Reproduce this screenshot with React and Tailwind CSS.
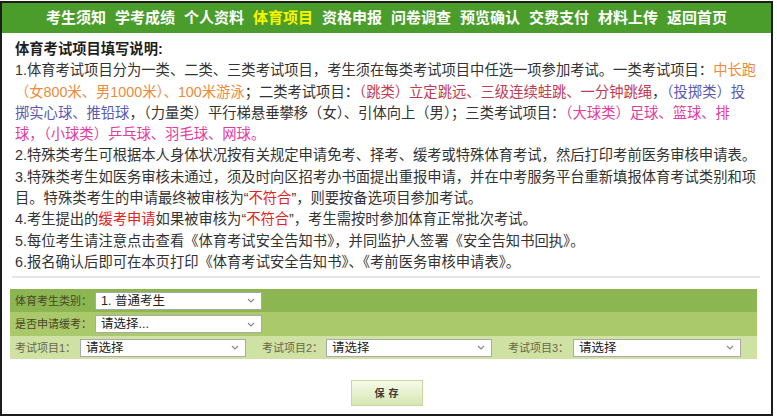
import React from "react";

const navItems = [
  "考生须知",
  "学考成绩",
  "个人资料",
  "体育项目",
  "资格申报",
  "问卷调查",
  "预览确认",
  "交费支付",
  "材料上传",
  "返回首页",
];

const Chevron = () => (
  <svg width="8" height="5" viewBox="0 0 8 5" className="shrink-0">
    <polyline points="1,1 4,4 7,1" fill="none" stroke="#888" strokeWidth="1.2" />
  </svg>
);

const FakeSelect = ({ value, width }) => (
  <div
    className={`flex h-[18px] items-center justify-between border border-[#a9a9a9] bg-white pl-[5px] pr-[6px] text-[12.5px] text-[#222] ${width}`}
  >
    <span className="leading-none">{value}</span>
    <Chevron />
  </div>
);

const Orange = ({ children }) => <span className="text-[#ef8a3a]">{children}</span>;
const Crimson = ({ children }) => <span className="text-[#bf3a52]">{children}</span>;
const Blue = ({ children }) => <span className="text-[#5a5ab2]">{children}</span>;
const Pink = ({ children }) => <span className="text-[#e43b9e]">{children}</span>;
const Red = ({ children }) => <span className="text-[#e52222]">{children}</span>;

export default function App() {
  return (
    <div
      className="mt-px box-border flex h-[415px] w-[773px] flex-col border-2 border-[#1c1c1c] bg-white"
      style={{ fontFamily: '"Liberation Sans", "Noto Sans CJK SC", sans-serif' }}
    >
      {/* top nav */}
      <div className="flex h-[30px] shrink-0 items-center justify-center gap-[9px] bg-[#4b9d2b] text-[15px] font-bold text-white">
        {navItems.map((item) => (
          <span key={item} className={item === "体育项目" ? "text-[#f7f700]" : ""}>
            {item}
          </span>
        ))}
      </div>

      {/* instructions */}
      <div className="pl-[13px] pt-[6px] text-[14.3px] leading-[21.3px] text-[#333]">
        <div className="whitespace-nowrap font-bold text-[#1e1e1e]">体育考试项目填写说明:</div>
        <div className="whitespace-nowrap">
          1.体育考试项目分为一类、二类、三类考试项目，考生须在每类考试项目中任选一项参加考试。一类考试项目：
          <Orange>中长跑</Orange>
        </div>
        <div className="whitespace-nowrap">
          <Orange>（女800米、男1000米）、100米游泳</Orange>；二类考试项目：
          <Crimson>（跳类）立定跳远、三级连续蛙跳、一分钟跳绳</Crimson>，<Blue>（投掷类）投</Blue>
        </div>
        <div className="whitespace-nowrap">
          <Blue>掷实心球、推铅球</Blue>，（力量类）平行梯悬垂攀移（女）、引体向上（男）；三类考试项目：
          <Pink>（大球类）足球、篮球、排</Pink>
        </div>
        <div className="whitespace-nowrap">
          <Pink>球，（小球类）乒乓球、羽毛球、网球。</Pink>
        </div>
        <div className="whitespace-nowrap">
          2.特殊类考生可根据本人身体状况按有关规定申请免考、择考、缓考或特殊体育考试，然后打印考前医务审核申请表。
        </div>
        <div className="whitespace-nowrap">
          3.特殊类考生如医务审核未通过，须及时向区招考办书面提出重报申请，并在中考服务平台重新填报体育考试类别和项
        </div>
        <div className="whitespace-nowrap">
          目。特殊类考生的申请最终被审核为“<Red>不符合</Red>”，则要按备选项目参加考试。
        </div>
        <div className="whitespace-nowrap">
          4.考生提出的<Red>缓考申请</Red>如果被审核为“<Red>不符合</Red>”，考生需按时参加体育正常批次考试。
        </div>
        <div className="whitespace-nowrap">
          5.每位考生请注意点击查看《体育考试安全告知书》，并同监护人签署《安全告知书回执》。
        </div>
        <div className="whitespace-nowrap">
          6.报名确认后即可在本页打印《体育考试安全告知书》、《考前医务审核申请表》。
        </div>
      </div>

      <div className="ml-[10px] mt-[3px] h-[2px] w-[748px] bg-[#e6e6e6]" />

      {/* form */}
      <div className="ml-[8px] mt-[11px] w-[747px] text-[11px]">
        <div className="flex h-[23px] items-center bg-[#8cb651] pl-[5px]">
          <span className="w-[77px] shrink-0 whitespace-nowrap text-[#4a4628]">体育考生类别：</span>
          <div className="ml-[3px]">
            <FakeSelect value="1. 普通考生" width="w-[167px]" />
          </div>
        </div>
        <div className="flex h-[24px] items-center bg-[#a9c96b] pl-[5px]">
          <span className="w-[77px] shrink-0 whitespace-nowrap text-[#4a4628]">是否申请缓考：</span>
          <div className="ml-[3px]">
            <FakeSelect value="请选择..." width="w-[167px]" />
          </div>
        </div>
        <div className="flex h-[23px] items-center whitespace-nowrap bg-[#cfe2a4] pl-[5px] text-[#6a664a]">
          <span className="w-[61px] shrink-0">考试项目1：</span>
          <div className="ml-[4px] shrink-0">
            <FakeSelect value="请选择" width="w-[166px]" />
          </div>
          <span className="ml-[16px] w-[61px] shrink-0">考试项目2：</span>
          <div className="ml-[3px] shrink-0">
            <FakeSelect value="请选择" width="w-[166px]" />
          </div>
          <span className="ml-[16px] w-[61px] shrink-0">考试项目3：</span>
          <div className="ml-[4px] shrink-0">
            <FakeSelect value="请选择" width="w-[168px]" />
          </div>
        </div>
      </div>

      {/* save */}
      <div className="mt-[21px] flex justify-center">
        <button className="flex h-[26px] w-[72px] items-center justify-center border border-[#c6d89c] bg-gradient-to-b from-[#f6faea] to-[#d6e7b1] pl-[4px] text-[10px] font-bold tracking-[4px] text-[#3a3a3a]">
          保存
        </button>
      </div>
    </div>
  );
}
